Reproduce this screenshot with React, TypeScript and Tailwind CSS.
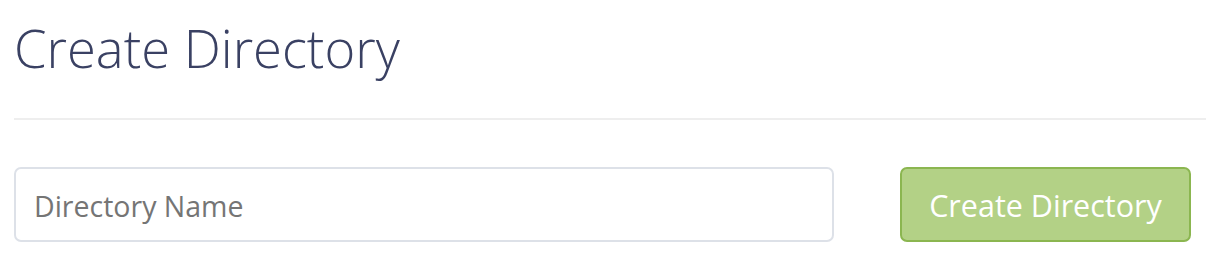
export default function App() {
  return (
    <div className="w-[1206px] h-[258px] bg-white pl-[14px] font-['Open_Sans',sans-serif]">
      <h1 className="pt-[16px] text-[52.5px] leading-[64px] font-light text-[#3a4163]">
        Create Directory
      </h1>
      <div className="mt-[38px] h-[2px] bg-[#eeeeee]" />
      <div className="mt-[47px] flex items-center justify-between pr-[15px]">
        <input
          type="text"
          placeholder="Directory Name"
          className="w-[820px] h-[75px] rounded-[7px] border-2 border-[#dde1e8] px-[18px] pt-[3px] text-[28.5px] text-[#333] placeholder:text-[#757575] outline-none"
        />
        <button className="w-[291px] h-[75px] rounded-[7px] border-2 border-[#8bb650] bg-[#b3d186] pt-[3px] text-[30.5px] text-white">
          Create Directory
        </button>
      </div>
    </div>
  );
}
